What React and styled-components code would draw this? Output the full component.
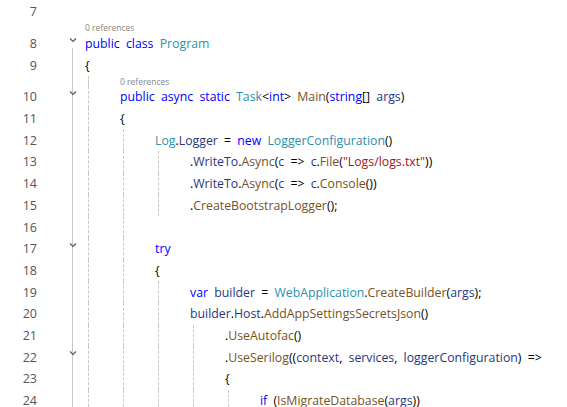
import React from "react";
import styled, { createGlobalStyle } from "styled-components";

const G = createGlobalStyle`
  html,body{margin:0;background:#fff;overflow:hidden;}
`;
const Editor = styled.div`
  font-family: "Open Sans", "DejaVu Sans", sans-serif;
  font-size: 12.3px;
  word-spacing: 3px;
  padding-top: 1px;
`;
const Row = styled.div`
  display: flex;
  height: 21.7px;
  align-items: center;
  position: relative;
`;
const LensRow = styled.div`
  display: flex;
  height: 10px;
  align-items: center;
  position: relative;
`;
const Num = styled.div`
  width: 37px;
  text-align: right;
  color: #555;
  font-size: 12.5px;
  word-spacing: 0;
  flex: none;
`;
const Fold = styled.div`
  width: 48px;
  flex: none;
  align-self: stretch;
  position: relative;
`;
const FoldBar = styled.div`
  position: absolute;
  left: 35px;
  top: ${p => (p.$start ? "15px" : "0")};
  bottom: 0;
  border-left: 1px solid #c8c8c8;
`;
const Chevron = styled.svg`
  position: absolute;
  left: 32px;
  top: 4px;
`;
const Indent = styled.div`
  width: 35px;
  flex: none;
  align-self: stretch;
  position: relative;
  &::before {
    content: "";
    display: ${p => (p.$guide ? "block" : "none")};
    position: absolute;
    left: 3px;
    top: 0;
    bottom: 0;
    border-left: 1px dashed #c8c8c8;
  }
`;
const Lens = styled.span`
  font-size: 8.5px;
  color: #888;
  word-spacing: 0;
`;
const T = styled.span`
  color: ${p => ({ k: "#0000ff", t: "#2b91af", m: "#74531f", s: "#a31515", v: "#1f377f", p: "#000" }[p.$c || "p"])};
`;

const lines = [
  [7, 0, [], false],
  ["lens", 0],
  [8, 0, [["k","public"]," ",["k","class"]," ",["t","Program"]], "fold"],
  [9, 0, ["{"], "bar"],
  ["lens", 1],
  [10, 1, [["k","public"]," ",["k","async"]," ",["k","static"]," ",["t","Task"],"<",["k","int"],"> ",["m","Main"],"(",["k","string"],"[] ",["v","args"],")"], "fold"],
  [11, 1, ["{"], "bar"],
  [12, 2, [["t","Log"],".",["v","Logger"]," = ",["k","new"]," ",["t","LoggerConfiguration"],"()"], "bar"],
  [13, 3, [".",["v","WriteTo"],".",["m","Async"],"(",["v","c"]," => ",["v","c"],".",["m","File"],"(",["s","\"Logs/logs.txt\""],"))"], "bar"],
  [14, 3, [".",["v","WriteTo"],".",["m","Async"],"(",["v","c"]," => ",["v","c"],".",["m","Console"],"())"], "bar"],
  [15, 3, [".",["m","CreateBootstrapLogger"],"();"], "bar"],
  [16, 2, [], "bar"],
  [17, 2, [["k","try"]], "fold"],
  [18, 2, ["{"], "bar"],
  [19, 3, [["k","var"]," ",["v","builder"]," = ",["t","WebApplication"],".",["m","CreateBuilder"],"(",["v","args"],");"], "bar"],
  [20, 3, [["v","builder"],".",["v","Host"],".",["m","AddAppSettingsSecretsJson"],"()"], "bar"],
  [21, 4, [".",["m","UseAutofac"],"()"], "bar"],
  [22, 4, [".",["m","UseSerilog"],"((",["v","context"],", ",["v","services"],", ",["v","loggerConfiguration"],") =>"], "fold"],
  [23, 4, ["{"], "bar"],
  [24, 5, [["k","if"]," (",["m","IsMigrateDatabase"],"(",["v","args"],"))"], "bar"],
];

const Chev = () => (
  <Chevron width="8" height="6" viewBox="0 0 8 6">
    <path d="M1 1.5 L4 4.5 L7 1.5" fill="none" stroke="#555" strokeWidth="1.1" />
  </Chevron>
);

export default function App() {
  let started = false;
  return (
    <Editor>
      <G />
      {lines.map((l, i) => {
        if (l[0] === "lens") {
          return (
            <LensRow key={i}>
              <Num />
              <Fold>{started && <FoldBar />}</Fold>
              {Array.from({ length: l[1] }).map((_, j) => <Indent key={j} $guide />)}
              <Lens>0 references</Lens>
            </LensRow>
          );
        }
        const [n, lvl, toks, f] = l;
        const first = f === "fold" && !started;
        if (f) started = true;
        return (
          <Row key={i}>
            <Num>{n}</Num>
            <Fold>
              {f && <FoldBar $start={first} />}
              {f === "fold" && <Chev />}
            </Fold>
            {Array.from({ length: lvl }).map((_, j) => <Indent key={j} $guide={n !== 8 && n !== 9} />)}
            <span>
              {toks.map((t, j) => typeof t === "string" ? <T key={j}>{t}</T> : <T key={j} $c={t[0]}>{t[1]}</T>)}
            </span>
          </Row>
        );
      })}
    </Editor>
  );
}
